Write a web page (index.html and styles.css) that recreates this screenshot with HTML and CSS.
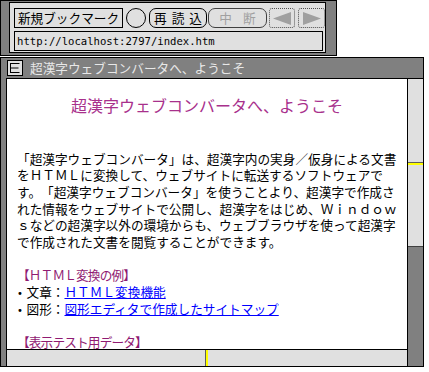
FILE: index.html
```html
<!DOCTYPE html>
<html lang="ja">
<head>
<meta charset="utf-8">
<title>超漢字ウェブコンバータへ、ようこそ</title>
<link rel="stylesheet" href="styles.css">
</head>
<body>
<div class="toolbar">
  <div class="panel">
    <div class="btnrow">
      <div class="btn bm">新規ブックマーク</div>
      <div class="circle"></div>
      <div class="btn rl">再読込</div>
      <div class="btn st">中断</div>
      <div class="btn ar back"><svg width="18" height="13" viewBox="0 0 18 13"><polygon points="0,6.5 18,0 18,13" fill="#a0a0a0"/></svg></div>
      <div class="btn ar fwd"><svg width="18" height="13" viewBox="0 0 18 13"><polygon points="18,6.5 0,0 0,13" fill="#a0a0a0"/></svg></div>
    </div>
    <div class="url">http://localhost:2797/index.htm</div>
  </div>
</div>
<div class="window">
  <div class="titlebar">
    <svg class="ticon" viewBox="0 0 16 16"><rect x="0.5" y="0.5" width="15" height="15" fill="#e0e0e0" stroke="#000"/><path d="M3.5 3V13M3 3.5H12.5M3 8H11.5M3 12.5H12.5" stroke="#000" fill="none"/></svg>
    <span class="ttext">超漢字ウェブコンバータへ、ようこそ</span>
  </div>
  <div class="frame">
    <div class="view">
      <h1 class="ttl">超漢字ウェブコンバータへ、ようこそ</h1>
      <p class="body">「超漢字ウェブコンバータ」は、超漢字内の実身／仮身による文書<br>をＨＴＭＬに変換して、ウェブサイトに転送するソフトウェアで<br>す。「超漢字ウェブコンバータ」を使うことより、超漢字で作成さ<br>れた情報をウェブサイトで公開し、超漢字をはじめ、Ｗｉｎｄｏｗ<br>ｓなどの超漢字以外の環境からも、ウェブブラウザを使って超漢字<br>で作成された文書を閲覧することができます。</p>
      <div class="block">
        <div class="sec">【ＨＴＭＬ変換の例】</div>
        <div class="li"><span class="dot">•</span>文章：<a href="#">ＨＴＭＬ変換機能</a></div>
        <div class="li"><span class="dot">•</span>図形：<a href="#">図形エディタで作成したサイトマップ</a></div>
        <div class="sec gap">【表示テスト用データ】</div>
      </div>
    </div>
    <div class="vscroll">
      <div class="vtrack"><div class="vmark"></div></div>
    </div>
    <div class="hscroll"><div class="hmark"></div></div>
  </div>
</div>
</body>
</html>
```

FILE: styles.css
```css
* { box-sizing: border-box; }
html, body { margin: 0; padding: 0; background: #fff; }
body {
  font-family: "Noto Sans CJK JP", sans-serif;
  font-size: 12.67px;
  color: #000;
  text-spacing-trim: space-all;
}

.toolbar {
  width: 337px;
  height: 56px;
  border: 1px solid #000;
  background: #808080;
  padding: 1px 10px 2px 8px;
}
.panel {
  height: 51px;
  border: 1px solid #000;
  background: #e0e0e0;
  padding: 5px 0 0 4px;
  display: flex;
  flex-direction: column;
  gap: 3px;
}
.btnrow { display: flex; align-items: flex-start; height: 20px; }
.btn {
  height: 20px;
  border: 1px solid #000;
  background: #e0e0e0;
  display: flex;
  align-items: center;
  justify-content: center;
  line-height: 1;
  white-space: nowrap;
}
.bm { width: 109px; }
.circle {
  width: 20px; height: 20px;
  border: 1px solid #000;
  border-radius: 50%;
  margin-left: 3px;
  background: #e0e0e0;
}
.rl { width: 58px; margin-left: 3px; border-radius: 7px; letter-spacing: 5px; padding-left: 5px; }
.st { width: 59px; margin-left: 1px; border-radius: 7px; letter-spacing: 11px; padding-left: 11px; color: #a0a0a0; border-color: #404040; }
.ar { width: 26px; margin-left: 2px; border: 1px dotted #505050; border-radius: 3px; }
.fwd { width: 27px; margin-left: 3px; }
.url {
  height: 20px;
  width: 309px;
  border: 1px solid #000;
  background: #e0e0e0;
  font-family: "DejaVu Sans Mono", monospace;
  font-size: 10.6px;
  padding-left: 2px;
  line-height: 18px;
}

.window {
  width: 424px;
  height: 310px;
  margin-top: 1px;
  border: 1px solid #000;
  background: #808080;
  display: flex;
  flex-direction: column;
}
.titlebar {
  height: 20px;
  flex: none;
  display: flex;
  align-items: center;
  padding-left: 6px;
  color: #e8e8e8;
}
.ticon { width: 16px; height: 16px; flex: none; display: block; }
.ttext { margin-left: 7px; line-height: 1; white-space: nowrap; }

.frame {
  margin-left: 5px;
  flex: 1;
  border-top: 1px solid #000;
  border-left: 1px solid #000;
  display: grid;
  grid-template-columns: 400px 16px;
  grid-template-rows: 270px 17px;
}
.view {
  grid-column: 1;
  grid-row: 1;
  background: #fff;
  overflow: hidden;
  padding: 0 10px;
}
.vscroll {
  grid-column: 2;
  grid-row: 1 / 3;
  border-left: 1px solid #000;
  background: #808080;
}
.vtrack {
  height: 168px;
  background: #e0e0e0;
  border-bottom: 1px solid #404040;
  padding-top: 83px;
}
.vmark { height: 3px; border-top: 1px solid #606060; background: #ffff00; }
.hscroll {
  grid-column: 1;
  grid-row: 2;
  border-top: 1px solid #000;
  background: #e0e0e0;
  padding-left: 198px;
}
.hmark { width: 3px; height: 100%; border-left: 1px solid #606060; background: #ffff00; }

.ttl {
  margin: 16px 0 0;
  font-size: 16px;
  font-weight: normal;
  line-height: 20px;
  text-align: center;
  color: #a8308c;
  white-space: nowrap;
}
.body {
  margin: 35.5px 0 0;
  line-height: 16.7px;
  white-space: nowrap;
}
.block { margin-top: 16.7px; line-height: 16.7px; white-space: nowrap; }
.sec { color: #901a72; letter-spacing: -0.85px; height: 16.7px; }
.sec.gap { margin-top: 16.7px; }
.li { height: 16.7px; }
.dot {
  display: inline-block;
  width: 9.5px;
  font-family: "DejaVu Sans", sans-serif;
  font-size: 10px;
}
.li a { color: #0000ff; text-decoration: underline; }
```
